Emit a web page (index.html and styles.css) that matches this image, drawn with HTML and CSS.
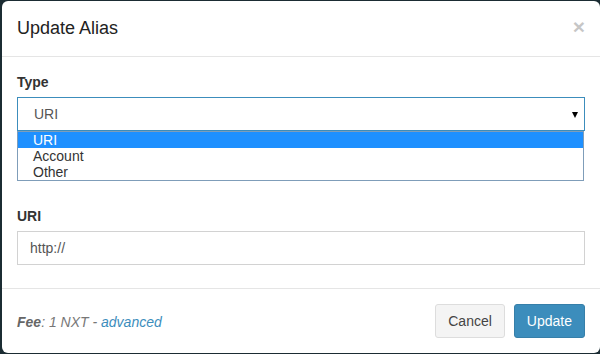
FILE: index.html
```html
<!DOCTYPE html>
<html lang="en">
<head>
    <meta charset="UTF-8">
    <meta name="viewport" content="width=device-width, initial-scale=1.0">
    <title>Update Alias</title>
    <link rel="stylesheet" href="styles.css">
</head>
<body>
    <div class="modal">
        <div class="modal-header">
            <h4 class="modal-title">Update Alias</h4>
            <button class="close" type="button">&times;</button>
        </div>

        <div class="modal-body">
            <div class="form-group type-group">
                <label class="control-label">Type</label>
                <div class="select-wrap">
                    <div class="select">
                        <span>URI</span>
                        <svg class="caret" width="6" height="6" viewBox="0 0 6 6">
                            <polygon points="0,0 6,0 3,6" fill="#000"/>
                        </svg>
                    </div>
                    <ul class="options">
                        <li class="option selected">URI</li>
                        <li class="option">Account</li>
                        <li class="option">Other</li>
                    </ul>
                </div>
            </div>

            <div class="form-group">
                <label class="control-label">URI</label>
                <input class="form-control" type="text" value="http://">
            </div>
        </div>

        <div class="modal-footer">
            <div class="fee"><strong>Fee</strong>: 1 NXT - <a href="#">advanced</a></div>
            <div class="actions">
                <button class="btn btn-default" type="button">Cancel</button>
                <button class="btn btn-primary" type="button">Update</button>
            </div>
        </div>
    </div>
</body>
</html>
```

FILE: styles.css
```css
body {
    margin: 0;
    height: 354px;
    overflow: hidden;
    background-color: #1b2c33;
    font-family: "Liberation Sans", Arial, sans-serif;
    font-size: 14px;
    color: #333;
}

.modal {
    margin: 1px 0 0 2px;
    height: 352px;
    background-color: #fff;
    border-radius: 6px;
    display: flex;
    flex-direction: column;
}

.modal-header {
    display: flex;
    justify-content: space-between;
    align-items: flex-start;
    padding: 14px 15px 15px 15px;
    border-bottom: 1px solid #e5e5e5;
}

.modal-title {
    margin: 0;
    font-size: 18px;
    font-weight: normal;
    line-height: 26px;
    color: #222;
}

.close {
    background: none;
    border: none;
    padding: 0;
    margin-top: 1px;
    font-family: "Liberation Sans", Arial, sans-serif;
    font-size: 21px;
    font-weight: bold;
    line-height: 21px;
    color: #000;
    opacity: 0.22;
    cursor: pointer;
}

.modal-body {
    padding: 15px 15px 23px 15px;
}

.form-group {
    display: flex;
    flex-direction: column;
}

.type-group {
    margin-bottom: 75px;
}

.control-label {
    font-weight: bold;
    line-height: 20px;
    margin-bottom: 5px;
}

.select-wrap {
    position: relative;
}

.select {
    height: 32px;
    display: flex;
    justify-content: space-between;
    align-items: center;
    padding: 0 6px 0 16px;
    border: 1px solid #3c8dbc;
    color: #555;
}

.caret {
    margin-top: 1px;
}

.options {
    position: absolute;
    top: 100%;
    left: 0;
    right: 1px;
    margin: 0;
    padding: 0;
    list-style: none;
    background-color: #fff;
    border: 1px solid #7f9db9;
}

.option {
    height: 16px;
    line-height: 16px;
    padding-left: 15px;
    color: #333;
}

.option.selected {
    background-color: #1e90ff;
    color: #fff;
}

.form-control {
    height: 34px;
    box-sizing: border-box;
    padding: 0 12px;
    border: 1px solid #d2d2d2;
    border-radius: 0;
    font-family: "Liberation Sans", Arial, sans-serif;
    font-size: 14px;
    color: #555;
    outline: none;
}

.modal-footer {
    margin-top: auto;
    display: flex;
    justify-content: space-between;
    align-items: center;
    padding: 15px;
    border-top: 1px solid #e5e5e5;
}

.fee {
    font-style: italic;
    color: #777;
    padding-top: 2px;
}

.fee strong {
    color: #666;
}

.fee a {
    color: #3c8dbc;
    text-decoration: none;
}

.actions {
    display: flex;
    gap: 9px;
}

.btn {
    height: 34px;
    padding: 0 12px;
    border: 1px solid transparent;
    border-radius: 3px;
    font-family: "Liberation Sans", Arial, sans-serif;
    font-size: 14px;
    cursor: pointer;
}

.btn-default {
    background-color: #f4f4f4;
    border-color: #ddd;
    color: #444;
}

.btn-primary {
    background-color: #3c8dbc;
    border-color: #367fa9;
    color: #fff;
}
```
